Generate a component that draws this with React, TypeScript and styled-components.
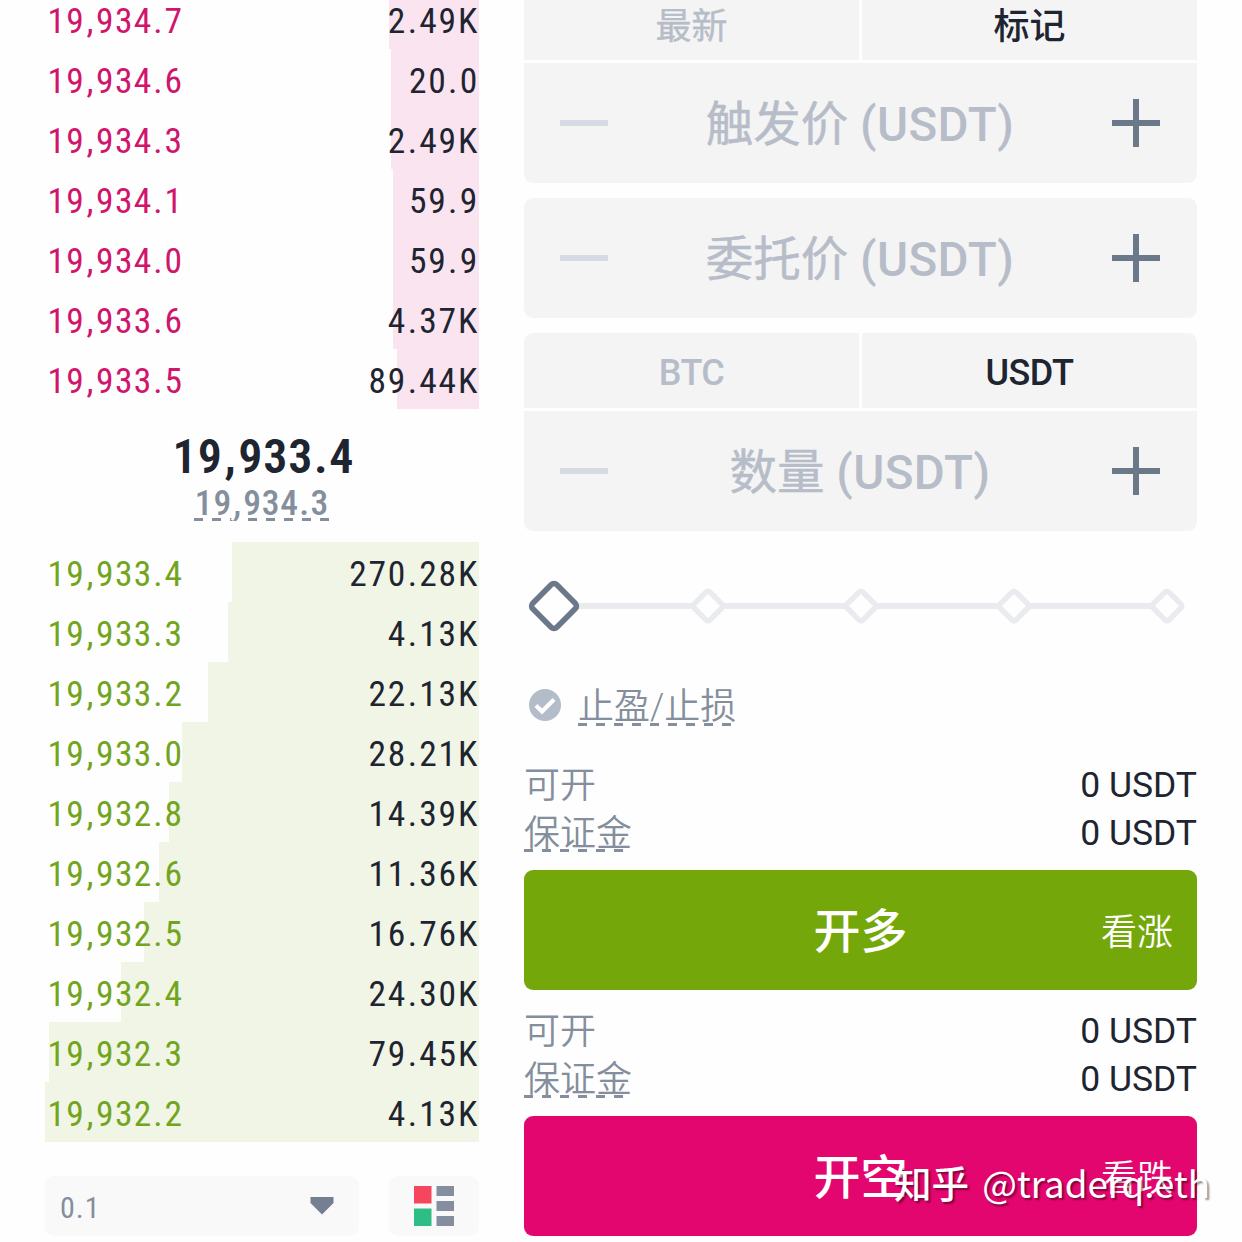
import React from 'react';
import styled, { createGlobalStyle } from 'styled-components';

const ink = '#1e2430';
const muted = '#848e9c';
const faint = '#b7bdc8';
const panel = '#f4f4f4';

const GlobalStyle = createGlobalStyle`
  body {
    margin: 0;
    background: #fefefe;
    overflow: hidden;
    font-family: Roboto, 'Noto Sans CJK SC', sans-serif;
  }
`;

const Screen = styled.main`
  box-sizing: border-box;
  position: relative;
  width: 1242px;
  height: 1242px;
  overflow: hidden;
  display: flex;
  gap: 45px;
  padding-left: 45px;
`;

const Book = styled.section`
  width: 434px;
  display: flex;
  flex-direction: column;
`;

const Levels = styled.div<{ $cut?: boolean }>`
  display: flex;
  flex-direction: column;
  margin-top: ${(p) => (p.$cut ? '-11px' : '0')};
`;

const Level = styled.div<{ $tint: string }>`
  height: 60px;
  display: flex;
  align-items: center;
  justify-content: space-between;
  font-size: 35.5px;
  line-height: 42px;
  background-image: linear-gradient(${(p) => p.$tint}, ${(p) => p.$tint});
  background-repeat: no-repeat;
  background-position: right top;
`;

const Figure = styled.span`
  display: inline-block;
  color: ${ink};
  font-stretch: 85%;
  letter-spacing: 1.75px;
  padding-top: 3px;
`;

const PriceFigure = styled(Figure)<{ $color: string }>`
  color: ${(p) => p.$color};
  letter-spacing: 1.35px;
  padding-left: 2.5px;
`;

const Mark = styled.span<{ $pad: number }>`
  padding: 0 ${(p) => p.$pad}em;
`;

const Mid = styled.div`
  height: 133px;
  display: flex;
  flex-direction: column;
  align-items: center;
`;

const LastPrice = styled.div`
  margin-top: 21px;
  font-size: 48px;
  line-height: 53px;
  font-weight: 600;
  font-stretch: 85%;
  letter-spacing: 0.9px;
  padding-left: 3px;
  color: ${ink};
`;

const dashes = `repeating-linear-gradient(90deg, ${muted} 0 9px, transparent 9px 18px)`;

const MarkPrice = styled.div`
  width: 136px;
  height: 40px;
  white-space: nowrap;
  text-align: center;
  font-size: 35.5px;
  line-height: 41px;
  font-weight: 500;
  font-stretch: 85%;
  letter-spacing: 0.8px;
  color: ${muted};
  background: ${dashes} 0 35px / 136px 3px no-repeat;
  ${Mark}:first-of-type {
    text-shadow: 3px 0 #fff, -3px 0 #fff, 2px 2px #fff;
  }
`;

const BookFooter = styled.div`
  display: flex;
  gap: 30px;
  margin-top: 34px;
`;

const Precision = styled.button`
  flex: 1;
  height: 60px;
  border: 0;
  border-radius: 9px;
  background: #f9f9fa;
  display: flex;
  align-items: center;
  justify-content: space-between;
  padding: 3px 25px 0 15px;
  font: 400 30px/36px Roboto, sans-serif;
  font-stretch: 85%;
  letter-spacing: 1px;
  color: ${muted};
`;

const Caret = styled.svg`
  margin-top: -4px;
`;

const Layout = styled.button`
  width: 90px;
  height: 60px;
  border: 0;
  padding: 0;
  border-radius: 9px;
  background: #f9f9fa;
  display: flex;
  align-items: center;
  justify-content: center;
`;

const Order = styled.section`
  width: 673px;
  display: flex;
  flex-direction: column;
  > * {
    flex-shrink: 0;
  }
`;

const Card = styled.div<{ $gap?: number; $cut?: boolean }>`
  display: flex;
  flex-direction: column;
  gap: 3px;
  border-radius: ${(p) => (p.$cut ? '0 0 9px 9px' : '9px')};
  overflow: hidden;
  margin-bottom: ${(p) => p.$gap ?? 15}px;
`;

const Tabs = styled.div<{ $height: number }>`
  display: flex;
  gap: 3px;
  height: ${(p) => p.$height}px;
`;

const Tab = styled.div<{ $on?: boolean; $latin?: boolean }>`
  flex: 1;
  background: ${panel};
  display: flex;
  align-items: center;
  justify-content: center;
  padding: ${(p) => (p.$latin ? '5px 0 0' : '0 0 6px')};
  box-sizing: border-box;
  font-size: 36px;
  line-height: 42px;
  font-weight: ${(p) => (p.$on || p.$latin ? 500 : 400)};
  letter-spacing: ${(p) => (p.$latin ? -0.5 : 0)}px;
  -webkit-text-stroke: ${(p) => (p.$on || p.$latin ? 0 : 0.4)}px ${faint};
  color: ${(p) => (p.$on ? ink : faint)};
`;

const Field = styled.div`
  height: 120px;
  box-sizing: border-box;
  padding: 0 37px 0 36px;
  background: ${panel};
  display: flex;
  align-items: center;
  justify-content: space-between;
`;

const Hint = styled.span`
  font-size: 47.5px;
  line-height: 56px;
  padding-top: 4px;
  color: ${faint};
  -webkit-text-stroke: 0.5px ${faint};
  white-space: nowrap;
`;

const Unit = styled.span`
  font-weight: 500;
  letter-spacing: 0.4px;
  -webkit-text-stroke: 0;
`;

const Toggle = styled.div`
  height: 60px;
  display: flex;
  align-items: center;
  gap: 17px;
  padding-left: 5px;
`;

const Dashed = styled.span<{ $line: number }>`
  font-size: 36px;
  line-height: 48px;
  height: 44px;
  font-weight: 350;
  color: ${muted};
  background: ${dashes} 0 ${(p) => p.$line}px / 100% 3px no-repeat;
`;

const Gap = styled.div`
  height: 25px;
`;

const Info = styled.div`
  height: 48px;
  display: flex;
  align-items: center;
  justify-content: space-between;
`;

const Label = styled.span`
  font-size: 36px;
  line-height: 44px;
  padding-top: 4px;
  font-weight: 350;
  color: ${muted};
`;

const Amount = styled.span`
  font-size: 35.5px;
  line-height: 44px;
  padding-top: 1px;
  color: ${ink};
`;

const Action = styled.button<{ $bg: string }>`
  height: 120px;
  border: 0;
  border-radius: 9px;
  background: ${(p) => p.$bg};
  color: #fff;
  display: grid;
  grid-template-columns: 1fr auto 1fr;
  align-items: center;
  padding: 0 24px;
  margin: 14px 0 16px;
  font-family: inherit;
`;

const ActionName = styled.span`
  grid-column: 2;
  font-size: 47px;
  line-height: 56px;
  font-weight: 500;
  padding-top: 3px;
`;

const ActionNote = styled.span`
  justify-self: end;
  font-size: 36px;
  line-height: 44px;
  font-weight: 350;
  padding-top: 5px;
`;

const Watermark = styled.div`
  position: absolute;
  left: 894px;
  top: 1154px;
  font: 400 36.7px/56px 'Noto Sans CJK SC', sans-serif;
  color: #fff;
  white-space: nowrap;
  text-shadow: 2px 2px 2px rgba(0, 0, 0, 0.45);
  b {
    font-size: 37.5px;
    font-weight: 500;
    margin-right: 5px;
  }
`;

const Num = ({ value }: { value: string }) => (
  <>
    {value.split(/([.,])/).map((part, i) =>
      part === ',' || part === '.' ? (
        <Mark key={i} $pad={part === ',' ? 0.035 : 0.015}>
          {part}
        </Mark>
      ) : (
        part
      ),
    )}
  </>
);

const Sign = ({ plus }: { plus?: boolean }) => (
  <svg width="48" height="48" viewBox="0 0 48 48" fill={plus ? '#6b788a' : '#d5dae3'}>
    <rect y="21" width="48" height="6" />
    {plus && <rect x="21" width="6" height="48" />}
  </svg>
);

const Stepper = ({ label }: { label: string }) => (
  <Field>
    <Sign />
    <Hint>
      {label} <Unit>(USDT)</Unit>
    </Hint>
    <Sign plus />
  </Field>
);

const SliderSvg = styled.svg`
  display: block;
  margin-bottom: 39px;
`;

const Slider = () => (
  <SliderSvg width="673" height="60" viewBox="0 0 673 60" fill="#fefefe">
    <path d="M30 30H643" stroke="#e9ebee" strokeWidth="6" />
    {[184, 337, 490, 643].map((x) => (
      <rect
        key={x}
        x={x - 11.2}
        y={18.8}
        width="22.4"
        height="22.4"
        rx="2.5"
        stroke="#e9ebee"
        strokeWidth="5.4"
        transform={`rotate(45 ${x} 30)`}
      />
    ))}
    <rect x="13" y="13" width="34" height="34" rx="4" stroke="#6b788a" strokeWidth="5.6" transform="rotate(45 30 30)" />
  </SliderSvg>
);

const asks: [string, string, number][] = [
  ['19,934.7', '2.49K', 90],
  ['19,934.6', '20.0', 88],
  ['19,934.3', '2.49K', 88],
  ['19,934.1', '59.9', 86],
  ['19,934.0', '59.9', 86],
  ['19,933.6', '4.37K', 86],
  ['19,933.5', '89.44K', 82],
];

const bids: [string, string, number][] = [
  ['19,933.4', '270.28K', 247],
  ['19,933.3', '4.13K', 251],
  ['19,933.2', '22.13K', 271],
  ['19,933.0', '28.21K', 297],
  ['19,932.8', '14.39K', 310],
  ['19,932.6', '11.36K', 320],
  ['19,932.5', '16.76K', 335],
  ['19,932.4', '24.30K', 358],
  ['19,932.3', '79.45K', 430],
  ['19,932.2', '4.13K', 434],
];

const Side = ({ rows, color, tint, cut }: { rows: typeof asks; color: string; tint: string; cut?: boolean }) => (
  <Levels $cut={cut}>
    {rows.map(([price, size, depth]) => (
      <Level key={price} $tint={tint} style={{ backgroundSize: `${depth}px 100%` }}>
        <PriceFigure $color={color}>
          <Num value={price} />
        </PriceFigure>
        <Figure>
          <Num value={size} />
        </Figure>
      </Level>
    ))}
  </Levels>
);

const Summary = () => (
  <div>
    <Info>
      <Label>可开</Label>
      <Amount>0 USDT</Amount>
    </Info>
    <Info>
      <Dashed $line={39}>保证金</Dashed>
      <Amount>0 USDT</Amount>
    </Info>
  </div>
);

export default function App() {
  return (
    <>
      <GlobalStyle />
      <Screen>
        <Book>
          <Side rows={asks} color="#d0156c" tint="#fae4f0" cut />
          <Mid>
            <LastPrice>
              <Num value="19,933.4" />
            </LastPrice>
            <MarkPrice>
              <Num value="19,934.3" />
            </MarkPrice>
          </Mid>
          <Side rows={bids} color="#72a51e" tint="#f0f5e5" />
          <BookFooter>
            <Precision>
              <span>0.1</span>
              <Caret width="24" height="18" viewBox="0 0 24 18">
                <path d="M0.5 0H23.5V6L12 17.5L0.5 6Z" fill="#747f91" />
              </Caret>
            </Precision>
            <Layout>
              <svg width="40" height="40" viewBox="0 0 40 40">
                <path d="M0 0H17.5V17.5H0Z" fill="#f6465d" />
                <path d="M0 22.5H17.5V40H0Z" fill="#2ebd85" />
                <path d="M22.5 0H40V10H22.5ZM22.5 15H40V25H22.5ZM22.5 30H40V40H22.5Z" fill="#848e9f" />
              </svg>
            </Layout>
          </BookFooter>
        </Book>
        <Order>
          <Card $cut>
            <Tabs $height={60}>
              <Tab>最新</Tab>
              <Tab $on>标记</Tab>
            </Tabs>
            <Stepper label="触发价" />
          </Card>
          <Card>
            <Stepper label="委托价" />
          </Card>
          <Card $gap={45}>
            <Tabs $height={75}>
              <Tab $latin>BTC</Tab>
              <Tab $on $latin>
                USDT
              </Tab>
            </Tabs>
            <Stepper label="数量" />
          </Card>
          <Slider />
          <Toggle>
            <svg width="32" height="32" viewBox="0 0 32 32">
              <circle cx="16" cy="16" r="16" fill="#b3bcc9" />
              <path d="M7 16.5L13 22.5L25 10.5" fill="none" stroke="#fff" strokeWidth="4.2" />
            </svg>
            <Dashed $line={40}>止盈/止损</Dashed>
          </Toggle>
          <Gap />
          <Summary />
          <Action $bg="#74a80a">
            <ActionName>开多</ActionName>
            <ActionNote>看涨</ActionNote>
          </Action>
          <Summary />
          <Action $bg="#e4066f">
            <ActionName>开空</ActionName>
            <ActionNote>看跌</ActionNote>
          </Action>
        </Order>
        <Watermark>
          <b>知乎</b> @traderq.eth
        </Watermark>
      </Screen>
    </>
  );
}
